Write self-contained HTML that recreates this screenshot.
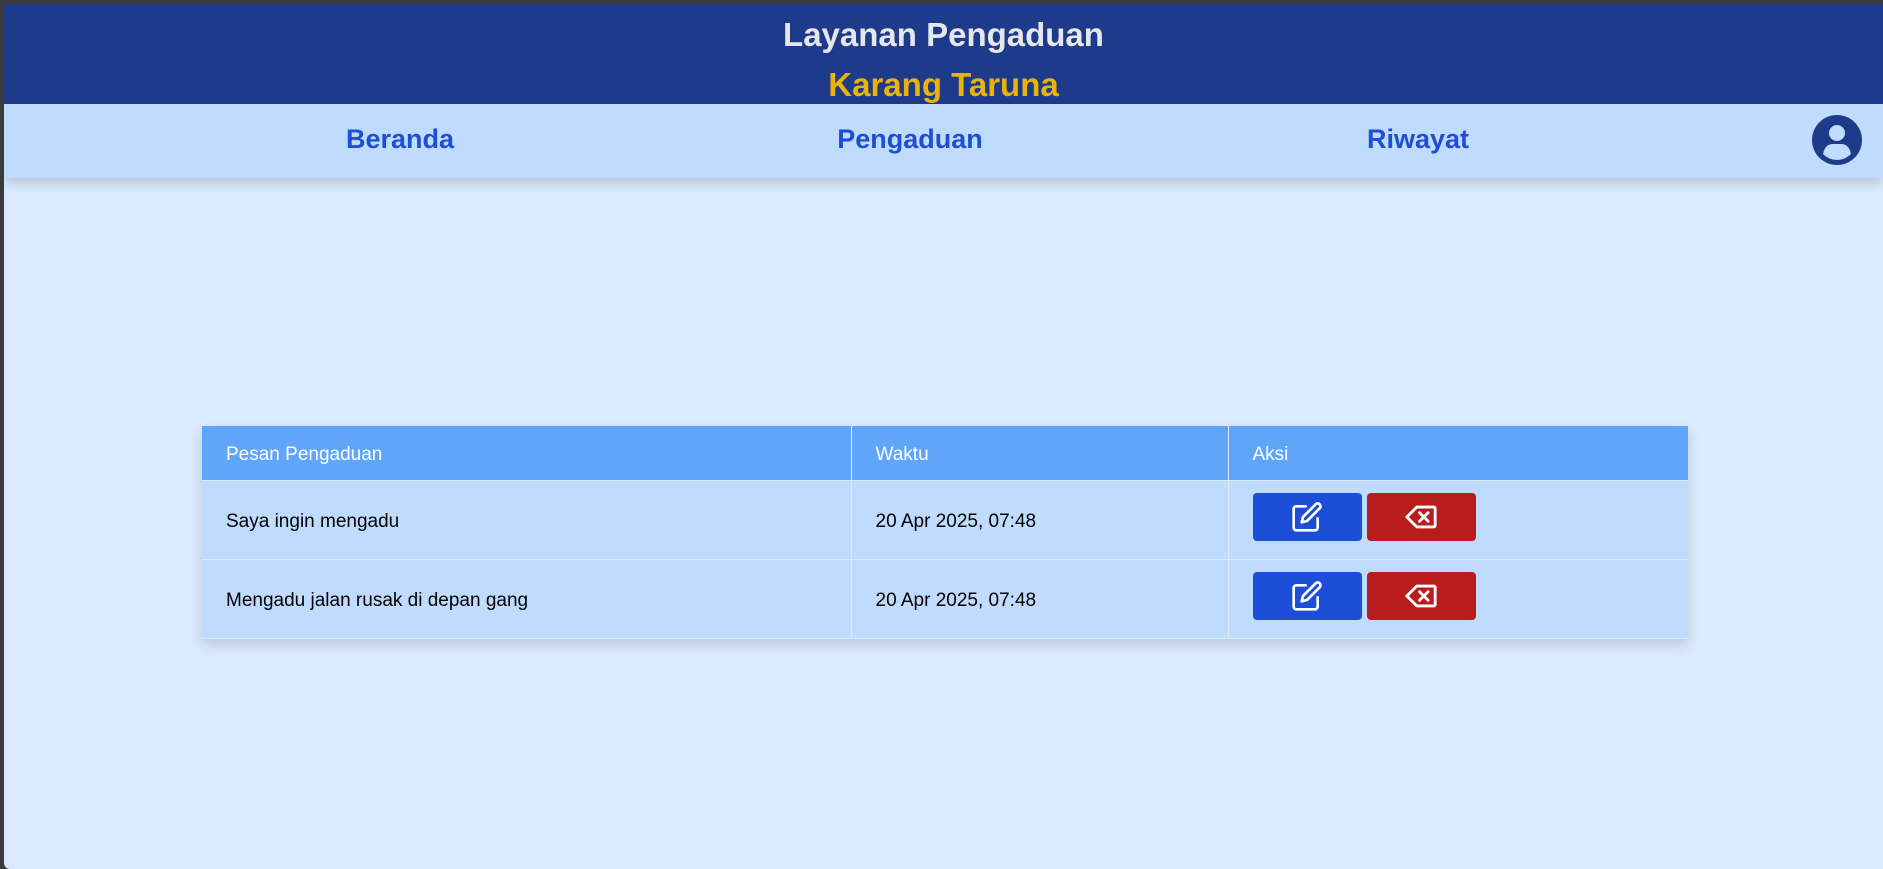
<!DOCTYPE html>
<html><head><meta charset="utf-8"><style>
*{margin:0;padding:0;box-sizing:border-box}
body{width:1883px;height:869px;overflow:hidden;background:#3a3a3a;font-family:"Liberation Sans",sans-serif;position:relative}
.page{position:absolute;left:4px;top:4px;right:0;bottom:0;background:#dbeafe;border-radius:0 0 0 6px;overflow:hidden}
.hdr{position:absolute;left:0;top:0;right:0;height:100px;background:#1e3a8a;text-align:center}
.t1{position:absolute;left:0;right:0;top:12px;color:#e5e7eb;font-weight:bold;font-size:33px}
.t2{position:absolute;left:0;right:0;top:62px;color:#eab308;font-weight:bold;font-size:33px}
.nav{position:absolute;left:0;right:0;top:100px;height:74px;background:#bfdbfe;box-shadow:0 6px 10px rgba(0,0,0,.15)}
.nav a{position:absolute;top:20px;color:#1d4ed8;font-weight:bold;font-size:27px;transform:translateX(-50%)}
.av{position:absolute;left:1808px;top:11px}
table{position:absolute;left:198px;top:422px;width:1486px;border-collapse:collapse;box-shadow:0 6px 12px rgba(0,0,0,.15);font-size:19px}
th{background:#60a5fa;color:#fff;text-align:left;font-weight:normal;height:54px;padding:5px 0 0 24px;border-right:1px solid #dbeafe;border-bottom:1px solid #dbeafe}
td{background:#bfdbfe;color:#000;height:79px;padding:4px 0 0 24px;border-right:1px solid #dbeafe;border-bottom:1px solid #dbeafe}
td.a{padding-top:0}
th:last-child,td:last-child{border-right:none}
.b{display:inline-flex;align-items:center;justify-content:center;width:109px;height:48px;border-radius:4px;vertical-align:middle;margin-right:5px;position:relative;top:-3px}
.e{background:#1d4ed8}.d{background:#b91c1c}
</style></head><body><div class="page">
<div class="hdr"><div class="t1">Layanan Pengaduan</div><div class="t2">Karang Taruna</div></div>
<div class="nav">
<a style="left:396px">Beranda</a><a style="left:906px">Pengaduan</a><a style="left:1414px">Riwayat</a>
<svg class="av" width="50" height="50" viewBox="0 0 50 50"><circle cx="25" cy="25" r="25" fill="#1e3a8a"/><circle cx="25" cy="18" r="8" fill="#bfdbfe"/><path d="M11 39 Q13 29 21 29 H29 Q37 29 39 39 Q33 45 25 45 Q17 45 11 39Z" fill="#bfdbfe"/></svg>
</div>
<table>
<tr><th style="width:649px">Pesan Pengaduan</th><th style="width:377px">Waktu</th><th>Aksi</th></tr>
<tr><td>Saya ingin mengadu</td><td>20 Apr 2025, 07:48</td><td class="a">
<span class="b e"><svg width="32" height="32" viewBox="0 0 24 24" fill="none" stroke="#fff" stroke-width="2" stroke-linecap="round" stroke-linejoin="round"><path d="M11 4H4a2 2 0 0 0-2 2v14a2 2 0 0 0 2 2h14a2 2 0 0 0 2-2v-7"/><path d="M18.5 2.5a2.1 2.1 0 0 1 3 3L12 15l-4 1 1-4z"/></svg></span><span class="b d"><svg width="40" height="34" viewBox="0 0 24 24" fill="none" stroke="#fff" stroke-width="2" stroke-linecap="round" stroke-linejoin="round"><path d="M21 5H9l-7 7 7 7h12a1 1 0 0 0 1-1V6a1 1 0 0 0-1-1z"/><path d="M17 9l-6 6M11 9l6 6"/></svg></span></td></tr>
<tr><td>Mengadu jalan rusak di depan gang</td><td>20 Apr 2025, 07:48</td><td class="a">
<span class="b e"><svg width="32" height="32" viewBox="0 0 24 24" fill="none" stroke="#fff" stroke-width="2" stroke-linecap="round" stroke-linejoin="round"><path d="M11 4H4a2 2 0 0 0-2 2v14a2 2 0 0 0 2 2h14a2 2 0 0 0 2-2v-7"/><path d="M18.5 2.5a2.1 2.1 0 0 1 3 3L12 15l-4 1 1-4z"/></svg></span><span class="b d"><svg width="40" height="34" viewBox="0 0 24 24" fill="none" stroke="#fff" stroke-width="2" stroke-linecap="round" stroke-linejoin="round"><path d="M21 5H9l-7 7 7 7h12a1 1 0 0 0 1-1V6a1 1 0 0 0-1-1z"/><path d="M17 9l-6 6M11 9l6 6"/></svg></span></td></tr>
</table>
</div></body></html>
